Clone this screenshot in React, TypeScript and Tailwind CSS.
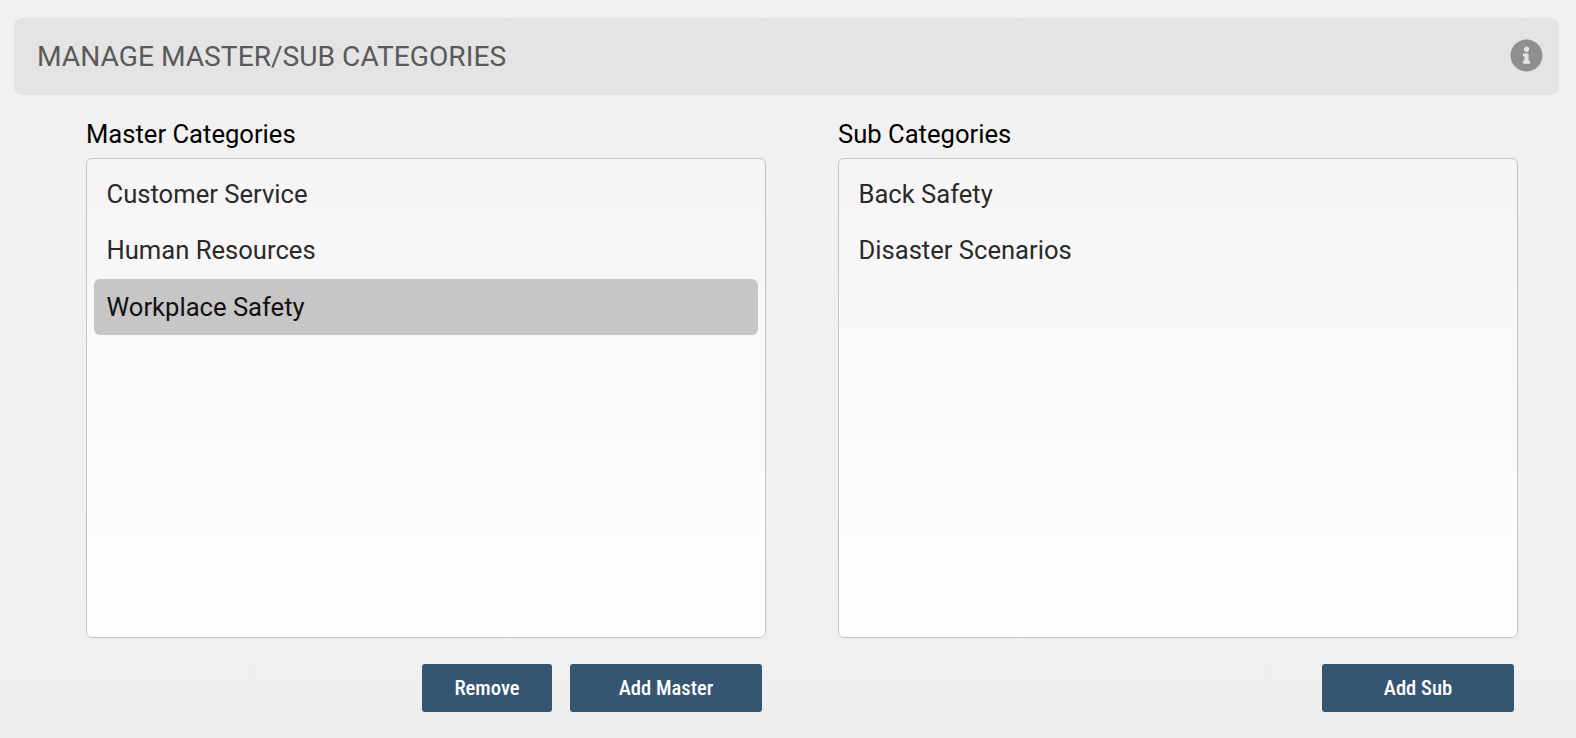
import React, { useState } from 'react';
import { FaInfoCircle } from 'react-icons/fa';

const masters = ['Customer Service', 'Human Resources', 'Workplace Safety'];
const subs = ['Back Safety', 'Disaster Scenarios'];

function ListBox({ items, selected }: { items: string[]; selected?: string }) {
  return (
    <div className="h-[480px] rounded-md border border-[#c4c4c4] bg-gradient-to-b from-[#f6f4f5] to-white px-[7px] pt-[8px]">
      {items.map(item => (
        <div
          key={item}
          className={
            item === selected
              ? 'flex h-14 items-center rounded-md bg-[#c6c6c6] pl-[12.5px] text-[25.6px] text-[#111]'
              : 'flex h-14 items-center rounded-md pb-[1px] pl-[12.5px] text-[25.6px] text-[#2a2a2a]'
          }
        >
          {item}
        </div>
      ))}
    </div>
  );
}

function ActionButton({ label, wide }: { label: string; wide?: boolean }) {
  return (
    <button
      className={
        (wide ? 'w-[192px] ' : 'w-[130px] ') +
        'h-12 rounded-[3px] bg-[#365572] pt-[1px] text-[20.6px] font-medium text-white [font-stretch:75%]'
      }
    >
      {label}
    </button>
  );
}

export default function App() {
  const [selected] = useState('Workplace Safety');

  return (
    <div className="h-[738px] overflow-hidden bg-gradient-to-b from-[#f1f1f1] to-[#efefef] pt-[18px] font-['Roboto',sans-serif]">
      <div className="mx-[14px] flex h-[77px] w-[1545px] items-center justify-between rounded-lg bg-[#e4e4e4] pl-[23px] pr-[16px]">
        <h1 className="pt-[2px] text-[28.16px] font-normal text-[#5a5a5a]">MANAGE MASTER/SUB CATEGORIES</h1>
        <FaInfoCircle className="mb-[3px] text-[33px] text-[#8f8f8f]" />
      </div>

      <div className="mt-[22px] grid grid-cols-[680px_680px] gap-x-[72px] pl-[86px]">
        <div>
          <div className="h-[41px] text-[25.6px] leading-[34px] text-black">Master Categories</div>
          <ListBox items={masters} selected={selected} />
          <div className="mt-[26px] flex justify-end gap-[18px] pr-[4px]">
            <ActionButton label="Remove" />
            <ActionButton label="Add Master" wide />
          </div>
        </div>

        <div>
          <div className="h-[41px] text-[25.6px] leading-[34px] text-black">Sub Categories</div>
          <ListBox items={subs} />
          <div className="mt-[26px] flex justify-end pr-[4px]">
            <ActionButton label="Add Sub" wide />
          </div>
        </div>
      </div>
    </div>
  );
}
